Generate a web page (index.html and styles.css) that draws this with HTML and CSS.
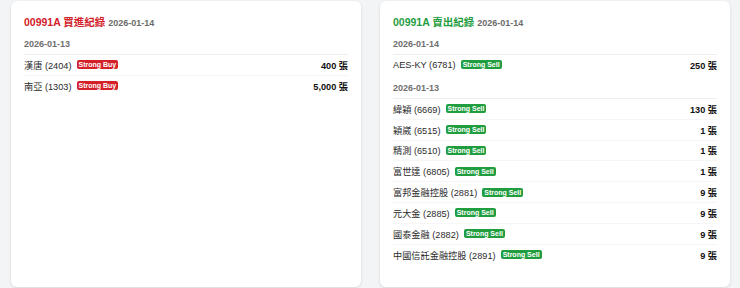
FILE: index.html
```html
<!DOCTYPE html>
<html lang="zh-Hant">
<head>
<meta charset="utf-8">
<title>00991A</title>
<link rel="stylesheet" href="styles.css">
</head>
<body>
<div class="grid">
  <section class="card">
    <h2 class="title"><span class="buy">00991A 買進紀錄</span> <span class="tdate">2026-01-14</span></h2>
    <div class="group">
      <div class="gdate">2026-01-13</div>
      <ul class="rows">
        <li class="row"><span class="name">漢唐 (2404)</span><span class="badge b-buy">Strong Buy</span><span class="amt">400 張</span></li>
        <li class="row"><span class="name">南亞 (1303)</span><span class="badge b-buy">Strong Buy</span><span class="amt">5,000 張</span></li>
      </ul>
    </div>
  </section>
  <section class="card">
    <h2 class="title"><span class="sell">00991A 賣出紀錄</span> <span class="tdate">2026-01-14</span></h2>
    <div class="group">
      <div class="gdate">2026-01-14</div>
      <ul class="rows">
        <li class="row"><span class="name">AES-KY (6781)</span><span class="badge b-sell">Strong Sell</span><span class="amt">250 張</span></li>
      </ul>
    </div>
    <div class="group">
      <div class="gdate">2026-01-13</div>
      <ul class="rows">
        <li class="row"><span class="name">緯穎 (6669)</span><span class="badge b-sell">Strong Sell</span><span class="amt">130 張</span></li>
        <li class="row"><span class="name">穎崴 (6515)</span><span class="badge b-sell">Strong Sell</span><span class="amt">1 張</span></li>
        <li class="row"><span class="name">精測 (6510)</span><span class="badge b-sell">Strong Sell</span><span class="amt">1 張</span></li>
        <li class="row"><span class="name">富世達 (6805)</span><span class="badge b-sell">Strong Sell</span><span class="amt">1 張</span></li>
        <li class="row"><span class="name">富邦金融控股 (2881)</span><span class="badge b-sell">Strong Sell</span><span class="amt">9 張</span></li>
        <li class="row"><span class="name">元大金 (2885)</span><span class="badge b-sell">Strong Sell</span><span class="amt">9 張</span></li>
        <li class="row"><span class="name">國泰金融 (2882)</span><span class="badge b-sell">Strong Sell</span><span class="amt">9 張</span></li>
        <li class="row"><span class="name">中國信託金融控股 (2891)</span><span class="badge b-sell">Strong Sell</span><span class="amt">9 張</span></li>
      </ul>
    </div>
  </section>
</div>
</body>
</html>
```
FILE: styles.css
```css
html, body {
  margin: 0;
  padding: 0;
  background: #f3f4f6;
  font-family: "Liberation Sans", "Noto Sans CJK TC", sans-serif;
  color: #2b2b2b;
}
.grid {
  display: grid;
  grid-template-columns: 350px 350px;
  column-gap: 19px;
  padding: 1px 10px 3px 11px;
  align-items: stretch;
}
.card {
  background: #fff;
  border-radius: 6px;
  box-shadow: 0 1px 3px rgba(0,0,0,0.12);
  padding: 14px 13px 22px 13px;
}
.title {
  margin: 0 0 9px 0;
  font-size: 10.5px;
  line-height: 14px;
  font-weight: 700;
}
.buy { color: #d32029; }
.sell { color: #1f9d3f; }
.tdate {
  font-size: 9px;
  color: #6b6b6b;
  font-weight: 700;
}
.group + .group { margin-top: 8px; }
.gdate {
  font-size: 9px;
  line-height: 11px;
  font-weight: 700;
  color: #6f6f6f;
  padding-bottom: 4px;
  border-bottom: 1px solid #eeeeee;
}
.rows {
  list-style: none;
  margin: 0;
  padding: 0;
}
.row {
  display: flex;
  align-items: center;
  height: 19.85px;
  border-bottom: 1px solid #f6f6f6;
  font-size: 9.2px;
}
.row:last-child { border-bottom: none; }
.name { color: #2b2b2b; }
.badge {
  margin-left: 5px;
  font-size: 7px;
  font-weight: 700;
  color: #fff;
  line-height: 9px;
  padding: 0 2px;
  border-radius: 2px;
}
.b-buy { background: #d32029; }
.b-sell { background: #1f9d3f; }
.amt {
  margin-left: auto;
  font-weight: 700;
  color: #111;
}
```
